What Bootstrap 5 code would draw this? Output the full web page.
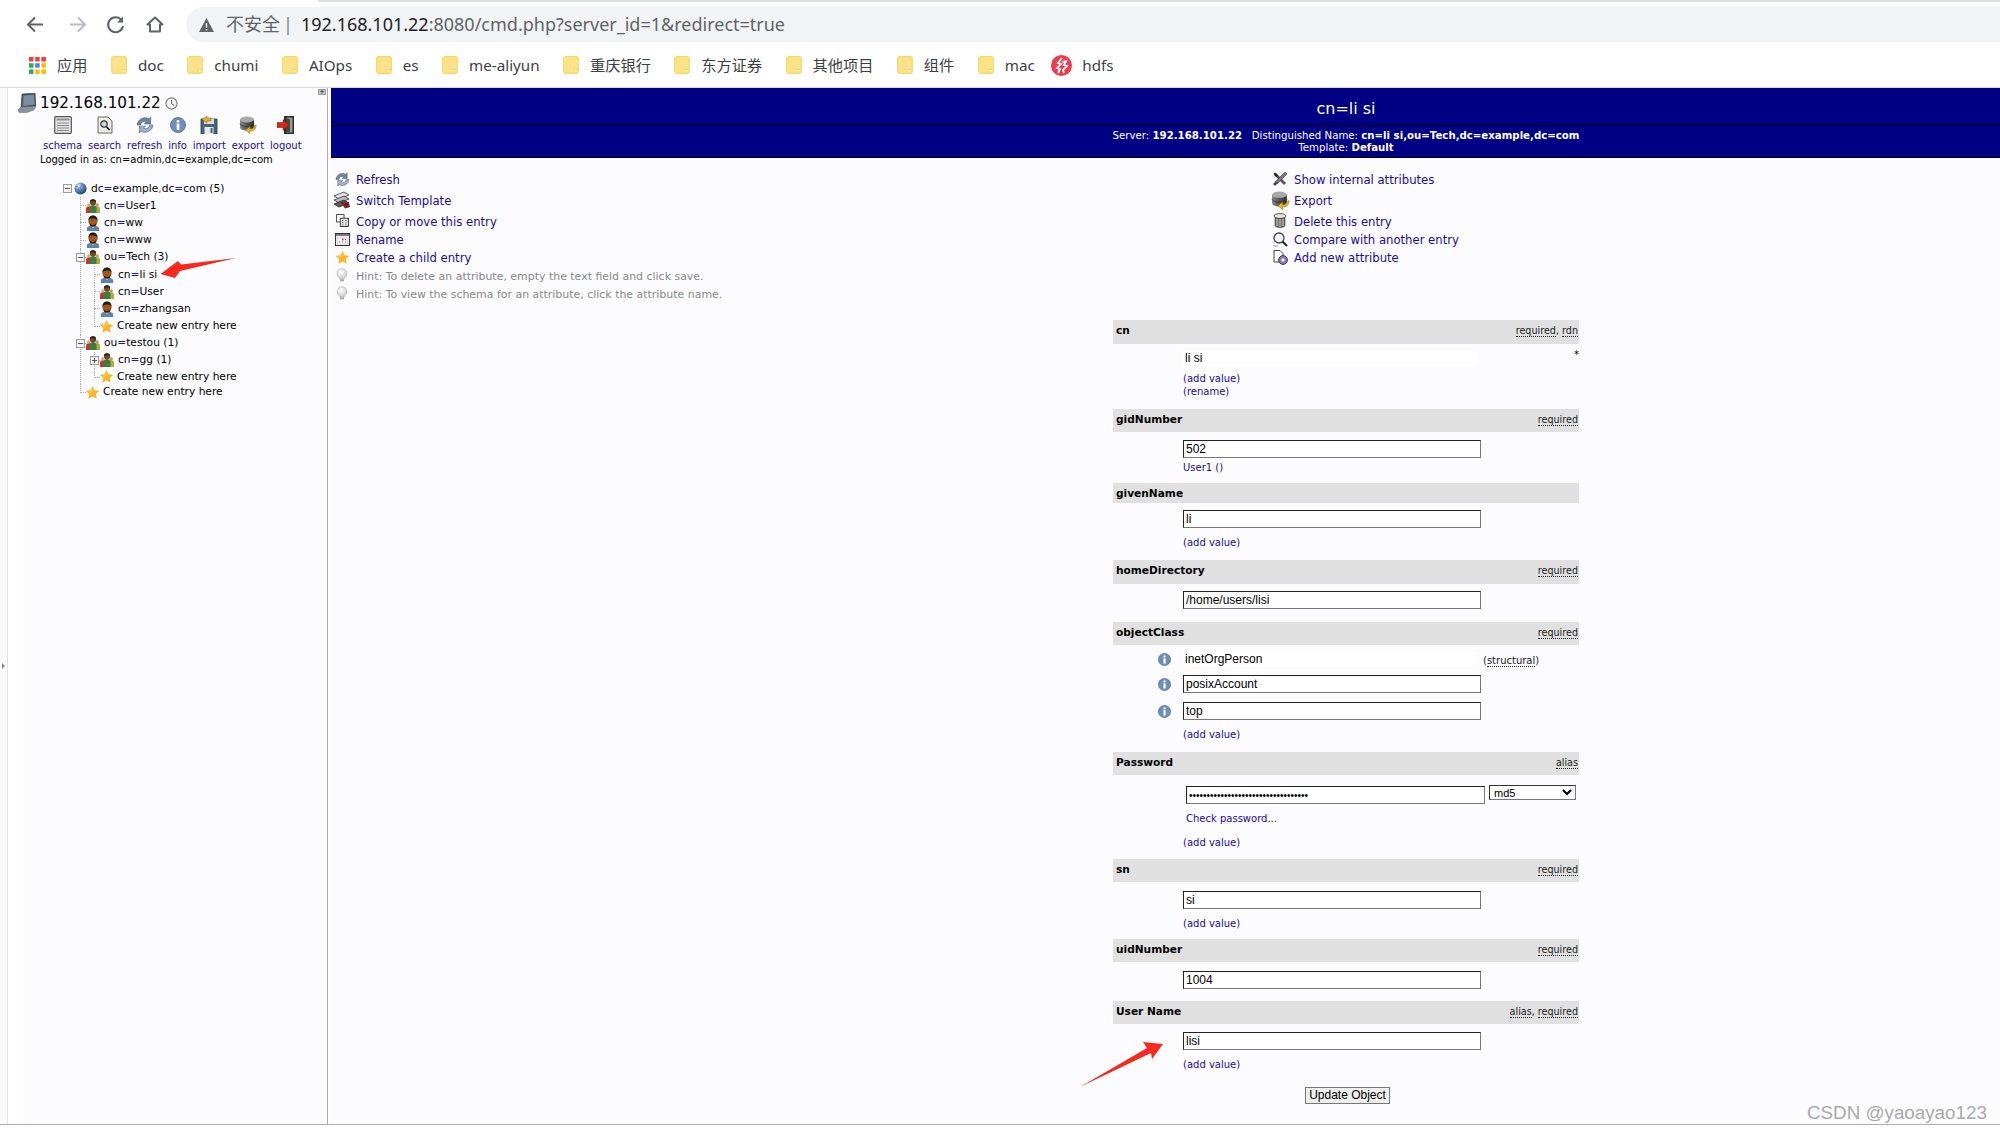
<!DOCTYPE html>
<html lang="zh">
<head>
    <meta charset="UTF-8">
    <title>phpLDAPadmin</title>
    <link href="https://cdn.jsdelivr.net/npm/bootstrap@5.3.0/dist/css/bootstrap.min.css" rel="stylesheet">
    <script src="https://cdn.jsdelivr.net/npm/bootstrap@5.3.0/dist/js/bootstrap.bundle.min.js"></script>
    <style>
        html, body { margin: 0; width: 2000px; height: 1133px; overflow: hidden; background: #fff; }
        body { font-family: "DejaVu Sans", sans-serif; font-size: 11px; color: #000; position: relative; }
        a { text-decoration: none; color: #1a0a9e; }
        .svg-defs { position: absolute; width: 0; height: 0; }

        /* browser chrome */
        .tab-strip { height: 2px; margin-left: 318px; background: #dee1e6; }
        .addr-row { height: 47px; padding-top: 5px; }
        .nav-ico { width: 40px; margin-right: 0; }
        .nav-back { margin-left: 16px; }
        .addr-bar { margin-left: 10px; flex: 1; height: 35px; background: #f1f3f4; border-radius: 18px 0 0 18px; padding-left: 13px; font-family: "Noto Sans", "Noto Sans CJK SC", sans-serif; font-size: 18px; color: #5f6368; white-space: nowrap; }
        .addr-host { color: #202124; }
        .addr-sep { margin: 0 8px 0 3px; color: #80868b; }
        .addr-warn { margin-right: 12px; }
        .bm-row { height: 33px; margin-bottom: 5px; padding-left: 29px; font-family: "Noto Sans", "Noto Sans CJK SC", sans-serif; font-size: 15.2px; color: #3c4043; gap: 23.5px; }
        .bm-item { gap: 11px; }
        .bm-last { margin-left: -7px; gap: 10px; }

        /* frames */
        .frames { height: 1038px; border-top: 1px solid #d8d8d8; border-bottom: 1px solid #aaaacc; }
        .left-strip { width: 8px; background: #fafafa; border-right: 1px solid #e4e4e4; flex: none; }
        .left-tick { width: 0; height: 0; border-top: 3px solid transparent; border-bottom: 3px solid transparent; border-left: 3px solid #888; margin-top: 575px; margin-left: 2px; }
        .tree-pane { width: 320px; flex: none; background: #fcfcff; border-left: 9px solid #fff; border-right: 1px solid #aaaacc; position: relative; padding-top: 5px; }
        .collapse-box { position: absolute; right: 1px; top: 1px; width: 8px; height: 6px; background: #c4c8d0; border: 1px solid #9a9eb0; color: #222; font-size: 7px; line-height: 4px; text-align: center; }
        .srv-line { height: 20px; font-size: 15.2px; padding-left: 1px; gap: 4px; }
        .tool-line { padding-left: 26px; gap: 5.9px; margin-top: 3px; font-size: 10px; text-align: center; }
        .tool-item { line-height: 13px; }
        .tool-item svg { display: block; margin: 0 auto 5px; }
        .logged-line { padding-left: 23px; font-size: 10px; line-height: 13px; margin-top: 1px; }

        .ldap-tree, .ldap-tree ul { list-style: none; padding: 0; margin: 0; }
        .ldap-tree { margin-top: 14px; font-size: 10.65px; }
        .ldap-tree ul { margin-left: 14px; }
        .ldap-tree > li > ul { margin-left: 63px; }
        .ldap-tree .tree-entry { position: relative; }
        .ldap-tree .tree-entry::before { content: ""; position: absolute; left: 0; top: 0; bottom: 0; border-left: 1px dotted #aaa; }
        .ldap-tree .tree-entry:last-child::before { bottom: auto; height: 9px; }
        .tree-entry > .tree-row::before { content: ""; position: absolute; left: 0; width: 6px; top: 8px; border-top: 1px dotted #aaa; }
        .tree-row { height: 17.2px; padding-left: 6px; position: relative; white-space: nowrap; }
        .tree-row svg { flex: none; margin-right: 4px; }
        .root-row { padding-left: 57px; }
        .row-s1 { height: 15px; }
        .row-s2 { height: 16px; }
        .expander { position: absolute; width: 9px; height: 9px; left: -4px; top: 4px; background: #f4f4f4; border: 1px solid #999; z-index: 1; }
        .expander::before { content: ""; position: absolute; left: 1px; right: 1px; top: 3px; height: 1px; background: #555; }
        .exp-plus::after { content: ""; position: absolute; top: 1px; bottom: 1px; left: 3px; width: 1px; background: #555; }
        .root-row .expander { left: 46px; }
        .eq-mark { color: #1414e0; }
        .comma-mark { color: #e03030; }

        /* main frame */
        .main-pane { width: 2030px; margin-left: 3px; flex: none; background: #fcfcff; }
        .title-box { height: 70px; background: #000084; border-bottom: 1px solid #000; color: #fff; text-align: center; }
        .title-main { height: 38px; border-bottom: 1px solid #000; font-size: 16px; line-height: 41px; }
        .title-sub { font-size: 10.2px; line-height: 12px; padding-top: 4px; }
        .act-area { padding-top: 12.5px; height: 146px; font-size: 11.65px; }
        .act-left { width: 938px; flex: none; }
        .act-list { display: grid; grid-template-rows: 21px 21px 19.5px 18px 18px 18px 18px; }
        .act-cell { white-space: nowrap; }
        .act-icon { width: 22px; margin-right: 3px; margin-bottom: 4px; flex: none; display: flex; justify-content: center; }
        .hint-text { color: #888; font-size: 10.95px; }

        .attr-form { width: 466px; margin-left: 782px; margin-top: 16px; }
        .attr-head { background: #e0e0e0; height: 23px; padding: 0 1px 0 3px; font-size: 10.6px; font-weight: 700; line-height: 20px; }
        .attr-note { font-weight: 400; font-size: 9.6px; color: #222; line-height: 22px; }
        .attr-note span { border-bottom: 1px dotted #222; line-height: 11px; display: inline-block; }
        .attr-body { display: flow-root; padding-left: 70px; font-size: 10px; }
        .b65 { height: 65px; } .b51 { height: 51px; } .b57 { height: 57px; } .b38 { height: 38px; } .b39 { height: 39px; }
        .b107 { height: 107px; } .b84 { height: 84px; } .b100 { height: 100px; }
        .attr-head.h24 { height: 24px; } .attr-head.h20 { height: 20px; }
        .ldap-input { display: block; width: 298px; height: 18px; margin-top: 8px; padding: 0 2px; border: 1px solid; border-color: #222 #777 #777 #222; background: #fff; font-family: "Liberation Sans", sans-serif; font-size: 12px; color: #000; border-radius: 0; }
        .ldap-input.mt7 { margin-top: 7px; }
        .ldap-input.mt9 { margin-top: 9px; }
        .ldap-value { width: 295px; height: 17px; background: #fff; padding-left: 2px; font-family: "Liberation Sans", sans-serif; font-size: 12px; line-height: 17px; }
        .val-first { margin-top: 6px; }
        .star-mark { margin-top: 3px; }
        .add-val { display: block; line-height: 13px; margin-top: 7.5px; }
        .add-val.mt5 { margin-top: 5px; }
        .add-val.mt3 { margin-top: 3px; }
        .add-val.mt0 { margin-top: 0; }
        .oc-body { padding-left: 45px; }
        .oc-row { gap: 12px; }
        .oc-row svg { flex: none; }
        .oc-row .ldap-input { margin-top: 0; }
        .oc-first { margin-top: 7px; height: 15px; }
        .oc-first .ldap-value { width: 295px; height: 15px; line-height: 15px; }
        .oc-second { margin-top: 8px; }
        .oc-third { margin-top: 9px; }
        .oc-add { margin-left: 25px; }
        .struct-note { color: #222; margin-left: -7px; line-height: 15px; padding-top: 2px; }
        .struct-note span { border-bottom: 1px dotted #222; line-height: 11px; display: inline-block; }
        .pw-body { padding-left: 73px; }
        .pw-input { width: 299px; margin-top: 11px; font-size: 10px; }
        .pw-select { width: 87px; height: 15px; margin: 10px 0 0 4px; padding: 0; font-family: "Liberation Sans", sans-serif; font-size: 11px; border: 1px solid #777; border-color: #333 #777 #777 #333; background: #fff; }
        .check-pw { line-height: 13px; margin-top: 8px; }
        .pw-add { margin-left: -3px; margin-top: 11px; }
        .update-btn { display: block; margin: 16px 0 0 122px; width: 85px; height: 17px; padding: 0; border: 1px solid #767676; border-radius: 0; background: #efefef; color: #000; font-family: "Liberation Sans", sans-serif; font-size: 12px; line-height: 15px; }

        .red-arrow { position: absolute; left: 0; top: 0; pointer-events: none; }
        .watermark { position: absolute; left: 1807px; top: 1101px; font-family: "Liberation Sans", sans-serif; font-size: 18.8px; line-height: 24px; color: #a9a9a9; white-space: nowrap; }
    </style>
</head>
<body>
<svg class="svg-defs">
    <defs>
        <radialGradient id="globeFill" cx="35%" cy="30%" r="75%"><stop offset="0" stop-color="#e8f2fb"/><stop offset=".45" stop-color="#5f8fc0"/><stop offset="1" stop-color="#1f3f66"/></radialGradient>
        <radialGradient id="bulbFill" cx="40%" cy="35%" r="70%"><stop offset="0" stop-color="#fff"/><stop offset="1" stop-color="#c8c8c0"/></radialGradient>
        <linearGradient id="dbFill" x1="0" x2="1"><stop offset="0" stop-color="#8a8a8a"/><stop offset=".4" stop-color="#5c5c5c"/><stop offset="1" stop-color="#333"/></linearGradient>

        <symbol id="i-person" viewBox="0 0 16 18">
            <path d="M1 18v-3c0-2 3-3 7-3s7 1 7 3v3z" fill="#5d84ab"/>
            <path d="M6 12l2 3 2-3z" fill="#dfe6ee"/>
            <ellipse cx="8" cy="7" rx="5.2" ry="6.4" fill="#a0561c"/>
            <path d="M2.8 6.5C2.6 2.5 5 .3 8 .3s5.4 2.2 5.2 6.2c-1-2-2.4-2.6-5.2-2.6S3.800 4.500 2.800 6.500z" fill="#1e1a18"/>
            <path d="M5 9.500c1.500 2.600 4.500 2.600 6 0l.5 1.800c-1.600 2.300-5.400 2.300-7 0z" fill="#2a1e14"/>
        </symbol>
        <symbol id="i-org" viewBox="0 0 16 16">
            <path d="M0 16v-5c0-2 2-3 4-3s4 1 4 3v5z" fill="#c8342c"/>
            <path d="M8 16v-5c0-2 2-3 4-3s4 1 4 3v5z" fill="#a8b03a"/>
            <path d="M4 16v-6c0-2 2-3 4-3s4 1 4 3v6z" fill="#3f7d3f"/>
            <circle cx="8" cy="4" r="3.600" fill="#6e4a28"/>
            <path d="M4.400 3.600C4.600 1 6 .2 8 .2s3.400.8 3.600 3.400C10 2.400 6 2.400 4.400 3.600z" fill="#222"/>
            <circle cx="3.300" cy="6.800" r="2" fill="#d8a878"/>
            <circle cx="12.700" cy="6.800" r="2" fill="#c89868"/>
        </symbol>
        <symbol id="i-globe" viewBox="0 0 14 14">
            <circle cx="7" cy="7" r="6.500" fill="url(#globeFill)"/>
            <path d="M2 5c2-1 3 0 3 2s1 3 2 3 1-2 0-3 0-3 2-4" fill="none" stroke="#2c4f78" stroke-width=".8" opacity=".6"/>
        </symbol>
        <symbol id="i-star" viewBox="0 0 16 16">
            <path d="M8 .5l2.300 5 5.400.6-4 3.700 1.100 5.400L8 12.500l-4.800 2.700 1.100-5.400-4-3.700 5.400-.6z" fill="#ffb31a" stroke="#f0a020" stroke-width=".4"/>
            <path d="M8 2.500l-1.500 4-4 .5 3 2.500 4-4z" fill="#ffd566" opacity=".7"/>
        </symbol>
        <symbol id="i-info" viewBox="0 0 16 16">
            <circle cx="8" cy="8" r="7.500" fill="#6d8fb8" stroke="#4a658a" stroke-width=".8"/>
            <circle cx="8" cy="4.300" r="1.400" fill="#fff"/>
            <rect x="6.700" y="6.500" width="2.700" height="6.500" fill="#fff"/>
        </symbol>
        <symbol id="i-refresh" viewBox="0 0 16 16">
            <path d="M1 8a7 7 0 0 1 10.500-5.500L13 1v6H7.500l1.800-1.800A3.500 3.500 0 0 0 4 8z" fill="#6d85a3" stroke="#3e4f66" stroke-width=".5"/>
            <path d="M15 8a7 7 0 0 1-10.500 5.500L3 15V9h5.500l-1.800 1.800A3.500 3.500 0 0 0 12 8z" fill="#9fb2c8" stroke="#3e4f66" stroke-width=".5"/>
        </symbol>
        <symbol id="i-schema" viewBox="0 0 18 18">
            <rect x=".7" y=".7" width="16.600" height="16.600" rx="1" fill="#e4e4e4" stroke="#555" stroke-width="1.200"/>
            <rect x="2.500" y="2.500" width="13" height="2" fill="#8f8f8f"/>
            <path d="M3 7h12M3 9.500h12M3 12h12M3 14.500h12" stroke="#888" stroke-width="1"/>
        </symbol>
        <symbol id="i-search" viewBox="0 0 16 18">
            <path d="M1 1h10l4 4v12H1z" fill="#f0ede6" stroke="#666"/>
            <circle cx="7" cy="8" r="3.200" fill="#cfd8e0" stroke="#333" stroke-width="1.200"/>
            <path d="M9.300 10.500l3.200 3.500" stroke="#222" stroke-width="1.800"/>
        </symbol>
        <symbol id="i-import" viewBox="0 0 18 18">
            <path d="M1 3h16v15H1z" fill="#47627f" stroke="#2a3a4c" stroke-width=".8"/>
            <rect x="4" y="3" width="10" height="5" fill="#dfdfdf"/>
            <rect x="4.500" y="11" width="9" height="7" fill="#e8e8e8"/>
            <rect x="10.500" y="12" width="2" height="5" fill="#47627f"/>
            <path d="M7 0L2 3.500 7 7V5h4V2H7z" fill="#e8b020" stroke="#7a5a10" stroke-width=".5"/>
        </symbol>
        <symbol id="i-db" viewBox="0 0 18 18">
            <path d="M1 3.500v8c0 1.800 3.400 3 7 3s7-1.200 7-3v-8z" fill="url(#dbFill)"/>
            <ellipse cx="8" cy="3.500" rx="7" ry="3" fill="#a8a8a8"/>
            <path d="M1 7.500c0 1.800 3.400 3 7 3s7-1.200 7-3" fill="none" stroke="#222" stroke-width=".6"/>
            <path d="M17 9c.5 4-2.500 6.500-6 6v2.500l-4.500-3.500 4.500-3.500V13c2.500.2 4-1 4-3z" fill="#e8b428" stroke="#8a6a14" stroke-width=".5"/>
        </symbol>
        <symbol id="i-logout" viewBox="0 0 18 18">
            <path d="M7 0h10v18H7z" fill="#2a2a2a"/>
            <path d="M9 1.500h6.500v15H9z" fill="#8fa090"/>
            <path d="M9 1.500l4 2v12l-4 1z" fill="#3d4a3e"/>
            <path d="M0 6.500h6V3.500l6 5.500-6 5.500v-3H0z" fill="#d42618" stroke="#7a1008" stroke-width=".5"/>
        </symbol>
        <symbol id="i-server" viewBox="0 0 18 20">
            <path d="M4 1l13-1 1 13-15 2z" fill="#4b5560" stroke="#33393f" stroke-width=".6"/>
            <path d="M5.500 2.500l10.500-.8.700 9.800-11.700 1.600z" fill="#7d8ea3"/>
            <path d="M0 17l3-3 15-1-2 4-7 2.500H1z" fill="#8b9299" stroke="#555" stroke-width=".4"/>
        </symbol>
        <symbol id="i-clock" viewBox="0 0 13 13">
            <circle cx="6.500" cy="6.500" r="5.600" fill="#f2f2f2" stroke="#777" stroke-width="1.100"/>
            <path d="M6.500 2.800v3.900l2.800 1.700" fill="none" stroke="#666" stroke-width="1"/>
        </symbol>
        <symbol id="i-switch" viewBox="0 0 18 18">
            <path d="M1 5l10-4 5 3-10 4z" fill="#e6e6e6" stroke="#333" stroke-width=".8"/>
            <path d="M1 9l10-4 5 3-10 4z" fill="#bdbdbd" stroke="#333" stroke-width=".8"/>
            <path d="M1 13l10-4 5 3-10 4z" fill="#5a5a5a" stroke="#222" stroke-width=".8"/>
            <path d="M8 11l8 1 1 4-5 1.500z" fill="#7a1c20"/>
        </symbol>
        <symbol id="i-copy" viewBox="0 0 14 14">
            <rect x=".6" y=".6" width="8" height="8" fill="#fff" stroke="#444" stroke-width="1"/>
            <rect x="4.600" y="4.600" width="8.800" height="8.800" fill="#e8e8e8" stroke="#333" stroke-width="1"/>
            <path d="M6.500 7h1.500M10 7h1.500M6.500 9.500h1.500M10 9.500h1.500M6.500 11.800h1.500M10 11.800h1.500" stroke="#555"/>
        </symbol>
        <symbol id="i-rename" viewBox="0 0 15 13">
            <rect x=".5" y=".5" width="14" height="12" fill="#f2f2f2" stroke="#333"/>
            <rect x="1" y="1" width="13" height="2" fill="#6d7c8f"/>
            <rect x="2.500" y="5" width="10" height="6" fill="#fff" stroke="#aaa" stroke-width=".5"/>
            <path d="M7 5.500h1.500v2H7z" fill="#c83a2a"/>
            <path d="M4 9h1M7 9h1M10 9h1M10 6.500h1" stroke="#555"/>
        </symbol>
        <symbol id="i-bulb" viewBox="0 0 12 14">
            <path d="M6 .6a5 5 0 0 1 3 9l-.5 1.400h-5L3 9.600a5 5 0 0 1 3-9z" fill="url(#bulbFill)" stroke="#bbb" stroke-width=".6"/>
            <path d="M4 11.300h4v2H4z" fill="#a8a8a8"/>
        </symbol>
        <symbol id="i-tools" viewBox="0 0 14 14">
            <path d="M1 3l2-2 10 10-2 2z" fill="#555"/>
            <path d="M2 .5L5 3.500 3.500 5 .5 2z" fill="#222"/>
            <path d="M12 0L2.500 9.500l2 2L14 2z" fill="#777" stroke="#333" stroke-width=".5"/>
            <path d="M0 12l3-3 2 2-3 3z" fill="#34506e"/>
        </symbol>
        <symbol id="i-trash" viewBox="0 0 14 15">
            <path d="M2 3v9.500c0 1.200 2.200 2 5 2s5-.8 5-2V3z" fill="#6e6e62" stroke="#333" stroke-width=".6"/>
            <path d="M4 6v7M7 6v8M10 6v7" stroke="#cfcfc4" stroke-width="1"/>
            <ellipse cx="7" cy="3" rx="6" ry="2.400" fill="#e6e6d8" stroke="#333" stroke-width=".8"/>
        </symbol>
        <symbol id="i-compare" viewBox="0 0 15 15">
            <circle cx="6" cy="6" r="5" fill="#f6f6f6" stroke="#444" stroke-width="1.300"/>
            <path d="M9.500 9.500l4.500 4.500" stroke="#222" stroke-width="2"/>
            <path d="M0 14h5" stroke="#999"/>
        </symbol>
        <symbol id="i-addattr" viewBox="0 0 15 15">
            <path d="M1 .5h6l3 3V12H1z" fill="#fff" stroke="#444"/>
            <circle cx="10" cy="10" r="4.400" fill="#8a7fa6" stroke="#3a3450"/>
            <path d="M8 10h4M10 8v4" stroke="#fff" stroke-width="1"/>
        </symbol>
        <symbol id="i-folder" viewBox="0 0 16 18">
            <rect x=".7" y=".7" width="14.600" height="16.600" rx="2" fill="#fde28a" stroke="#f6d869" stroke-width="1.200"/>
            <path d="M11 17v-3.500h4.300" fill="#fff3b8" stroke="#f6d869"/>
        </symbol>
    </defs>
</svg>

<div class="tab-strip"></div>
<div class="addr-row d-flex align-items-start">
    <svg class="nav-ico nav-back" width="40" height="35" viewBox="0 0 40 35"><path d="M27 17.500H13M19 10.500l-7 7 7 7" fill="none" stroke="#5f6368" stroke-width="2"/></svg>
    <svg class="nav-ico" width="40" height="35" viewBox="0 0 40 35"><path d="M14 17.500h14M22 10.500l7 7-7 7" fill="none" stroke="#b8bbbf" stroke-width="2"/></svg>
    <svg class="nav-ico" width="40" height="35" viewBox="0 0 40 35"><path d="M25.500 13a7.500 7.500 0 1 0 1.500 6" fill="none" stroke="#5f6368" stroke-width="2"/><path d="M27 9.500v6h-6z" fill="#5f6368"/></svg>
    <svg class="nav-ico" width="40" height="35" viewBox="0 0 40 35"><path d="M19 10.500l-7.500 7H14v7h10v-7h2.500z" fill="none" stroke="#5f6368" stroke-width="2" stroke-linejoin="round"/></svg>
    <div class="addr-bar d-flex align-items-center">
        <svg class="addr-warn" width="15" height="14" viewBox="0 0 15 14"><path d="M7.500 0L15 14H0z" fill="#5f6368"/><path d="M6.800 5h1.400v5H6.800zM6.800 11h1.400v1.400H6.800z" fill="#f1f3f4"/></svg>
        <span>不安全</span><span class="addr-sep">|</span><span><span class="addr-host">192.168.101.22</span>:8080/cmd.php?server_id=1&amp;redirect=true</span>
    </div>
</div>
<div class="bm-row d-flex align-items-center">
    <div class="bm-item d-flex align-items-center">
        <svg width="17" height="17" viewBox="0 0 17 17">
            <rect width="4.500" height="4.500" fill="#ea4335"/><rect x="6.200" width="4.500" height="4.500" fill="#ea4335"/><rect x="12.400" width="4.500" height="4.500" fill="#ea4335"/>
            <rect y="6.200" width="4.500" height="4.500" fill="#34a853"/><rect x="6.200" y="6.200" width="4.500" height="4.500" fill="#4285f4"/><rect x="12.400" y="6.200" width="4.500" height="4.500" fill="#fbbc05"/>
            <rect y="12.400" width="4.500" height="4.500" fill="#34a853"/><rect x="6.200" y="12.400" width="4.500" height="4.500" fill="#fbbc05"/><rect x="12.400" y="12.400" width="4.500" height="4.500" fill="#fbbc05"/>
        </svg><span>应用</span>
    </div>
    <div class="bm-item d-flex align-items-center"><svg width="16" height="18"><use href="#i-folder"/></svg><span>doc</span></div>
    <div class="bm-item d-flex align-items-center"><svg width="16" height="18"><use href="#i-folder"/></svg><span>chumi</span></div>
    <div class="bm-item d-flex align-items-center"><svg width="16" height="18"><use href="#i-folder"/></svg><span>AIOps</span></div>
    <div class="bm-item d-flex align-items-center"><svg width="16" height="18"><use href="#i-folder"/></svg><span>es</span></div>
    <div class="bm-item d-flex align-items-center"><svg width="16" height="18"><use href="#i-folder"/></svg><span>me-aliyun</span></div>
    <div class="bm-item d-flex align-items-center"><svg width="16" height="18"><use href="#i-folder"/></svg><span>重庆银行</span></div>
    <div class="bm-item d-flex align-items-center"><svg width="16" height="18"><use href="#i-folder"/></svg><span>东方证券</span></div>
    <div class="bm-item d-flex align-items-center"><svg width="16" height="18"><use href="#i-folder"/></svg><span>其他项目</span></div>
    <div class="bm-item d-flex align-items-center"><svg width="16" height="18"><use href="#i-folder"/></svg><span>组件</span></div>
    <div class="bm-item d-flex align-items-center"><svg width="16" height="18"><use href="#i-folder"/></svg><span>mac</span></div>
    <div class="bm-item bm-last d-flex align-items-center">
        <svg width="21" height="21" viewBox="0 0 21 21"><circle cx="10.500" cy="10.500" r="10.500" fill="#ee3b4f"/><path d="M11 3l-4 5 3 1-4 4 3 1-2 4M11 7l4-1-2 4 3 1-4 4 1 3" fill="none" stroke="#fff" stroke-width="1.800"/></svg><span>hdfs</span>
    </div>
</div>

<div class="frames d-flex overflow-hidden">
    <div class="left-strip"><div class="left-tick"></div></div>
    <aside class="tree-pane">
        <div class="collapse-box">+</div>
        <div class="srv-line d-flex align-items-center">
            <svg width="18" height="20"><use href="#i-server"/></svg>
            <span>192.168.101.22</span>
            <svg width="13" height="13"><use href="#i-clock"/></svg>
        </div>
        <div class="tool-line d-flex">
            <a class="tool-item" href="#"><svg width="18" height="18"><use href="#i-schema"/></svg>schema</a>
            <a class="tool-item" href="#"><svg width="16" height="18"><use href="#i-search"/></svg>search</a>
            <a class="tool-item" href="#"><svg width="18" height="18"><use href="#i-refresh"/></svg>refresh</a>
            <a class="tool-item" href="#"><svg width="16" height="18"><use href="#i-info"/></svg>info</a>
            <a class="tool-item" href="#"><svg width="18" height="18"><use href="#i-import"/></svg>import</a>
            <a class="tool-item" href="#"><svg width="18" height="18"><use href="#i-db"/></svg>export</a>
            <a class="tool-item" href="#"><svg width="18" height="18"><use href="#i-logout"/></svg>logout</a>
        </div>
        <div class="logged-line">Logged in as: cn=admin,dc=example,dc=com</div>

        <ul class="ldap-tree">
            <li>
                <div class="tree-row root-row d-flex align-items-center"><span class="expander"></span><svg width="13" height="13"><use href="#i-globe"/></svg>dc<span class="eq-mark">=</span>example<span class="comma-mark">,</span>dc<span class="eq-mark">=</span>com (5)</div>
                <ul>
                    <li class="tree-entry"><div class="tree-row d-flex align-items-center"><svg width="14" height="14"><use href="#i-org"/></svg>cn<span class="eq-mark">=</span>User1</div></li>
                    <li class="tree-entry"><div class="tree-row d-flex align-items-center"><svg width="14" height="16"><use href="#i-person"/></svg>cn<span class="eq-mark">=</span>ww</div></li>
                    <li class="tree-entry"><div class="tree-row d-flex align-items-center"><svg width="14" height="16"><use href="#i-person"/></svg>cn<span class="eq-mark">=</span>www</div></li>
                    <li class="tree-entry">
                        <div class="tree-row d-flex align-items-center"><span class="expander"></span><svg width="14" height="14"><use href="#i-org"/></svg>ou<span class="eq-mark">=</span>Tech (3)</div>
                        <ul>
                            <li class="tree-entry"><div class="tree-row d-flex align-items-center"><svg width="14" height="16"><use href="#i-person"/></svg>cn<span class="eq-mark">=</span>li si</div></li>
                            <li class="tree-entry"><div class="tree-row d-flex align-items-center"><svg width="14" height="14"><use href="#i-org"/></svg>cn<span class="eq-mark">=</span>User</div></li>
                            <li class="tree-entry"><div class="tree-row d-flex align-items-center"><svg width="14" height="16"><use href="#i-person"/></svg>cn<span class="eq-mark">=</span>zhangsan</div></li>
                            <li class="tree-entry"><div class="tree-row d-flex align-items-center"><svg width="13" height="13"><use href="#i-star"/></svg>Create new entry here</div></li>
                        </ul>
                    </li>
                    <li class="tree-entry">
                        <div class="tree-row d-flex align-items-center"><span class="expander"></span><svg width="14" height="14"><use href="#i-org"/></svg>ou<span class="eq-mark">=</span>testou (1)</div>
                        <ul>
                            <li class="tree-entry"><div class="tree-row d-flex align-items-center"><span class="expander exp-plus"></span><svg width="14" height="14"><use href="#i-org"/></svg>cn<span class="eq-mark">=</span>gg (1)</div></li>
                            <li class="tree-entry"><div class="tree-row row-s1 d-flex align-items-center"><svg width="13" height="13"><use href="#i-star"/></svg>Create new entry here</div></li>
                        </ul>
                    </li>
                    <li class="tree-entry"><div class="tree-row row-s2 d-flex align-items-center"><svg width="13" height="13"><use href="#i-star"/></svg>Create new entry here</div></li>
                </ul>
            </li>
        </ul>
    </aside>

    <main class="main-pane">
        <div class="title-box">
            <div class="title-main">cn=li si</div>
            <div class="title-sub">
                Server: <b>192.168.101.22</b> &nbsp; Distinguished Name: <b>cn=li si,ou=Tech,dc=example,dc=com</b><br>
                Template: <b>Default</b>
            </div>
        </div>

        <div class="act-area d-flex">
            <div class="act-left act-list">
                <div class="act-cell d-flex align-items-center"><span class="act-icon"><svg width="15" height="15"><use href="#i-refresh"/></svg></span><a href="#">Refresh</a></div>
                <div class="act-cell d-flex align-items-center"><span class="act-icon"><svg width="18" height="18"><use href="#i-switch"/></svg></span><a href="#">Switch Template</a></div>
                <div class="act-cell d-flex align-items-center"><span class="act-icon"><svg width="13" height="13"><use href="#i-copy"/></svg></span><a href="#">Copy or move this entry</a></div>
                <div class="act-cell d-flex align-items-center"><span class="act-icon"><svg width="15" height="13"><use href="#i-rename"/></svg></span><a href="#">Rename</a></div>
                <div class="act-cell d-flex align-items-center"><span class="act-icon"><svg width="13" height="13"><use href="#i-star"/></svg></span><a href="#">Create a child entry</a></div>
                <div class="act-cell d-flex align-items-center"><span class="act-icon"><svg width="12" height="14"><use href="#i-bulb"/></svg></span><span class="hint-text">Hint: To delete an attribute, empty the text field and click save.</span></div>
                <div class="act-cell d-flex align-items-center"><span class="act-icon"><svg width="12" height="14"><use href="#i-bulb"/></svg></span><span class="hint-text">Hint: To view the schema for an attribute, click the attribute name.</span></div>
            </div>
            <div class="act-list">
                <div class="act-cell d-flex align-items-center"><span class="act-icon"><svg width="14" height="14"><use href="#i-tools"/></svg></span><a href="#">Show internal attributes</a></div>
                <div class="act-cell d-flex align-items-center"><span class="act-icon"><svg width="19" height="19"><use href="#i-db"/></svg></span><a href="#">Export</a></div>
                <div class="act-cell d-flex align-items-center"><span class="act-icon"><svg width="14" height="15"><use href="#i-trash"/></svg></span><a href="#">Delete this entry</a></div>
                <div class="act-cell d-flex align-items-center"><span class="act-icon"><svg width="15" height="15"><use href="#i-compare"/></svg></span><a href="#">Compare with another entry</a></div>
                <div class="act-cell d-flex align-items-center"><span class="act-icon"><svg width="15" height="15"><use href="#i-addattr"/></svg></span><a href="#">Add new attribute</a></div>
            </div>
        </div>

        <form class="attr-form" onsubmit="return false">
            <div class="attr-head h24 d-flex justify-content-between"><span>cn</span><span class="attr-note"><span>required</span>, <span>rdn</span></span></div>
            <div class="attr-body b65">
                <div class="d-flex justify-content-between">
                    <div class="ldap-value val-first">li si</div>
                    <span class="star-mark">*</span>
                </div>
                <a class="add-val mt5" href="#">(add value)</a>
                <a class="add-val mt0" href="#">(rename)</a>
            </div>

            <div class="attr-head d-flex justify-content-between"><span>gidNumber</span><span class="attr-note"><span>required</span></span></div>
            <div class="attr-body b51">
                <input class="ldap-input" type="text" value="502">
                <a class="add-val mt3" href="#">User1 ()</a>
            </div>

            <div class="attr-head h20 d-flex justify-content-between"><span>givenName</span></div>
            <div class="attr-body b57">
                <input class="ldap-input mt7" type="text" value="li">
                <a class="add-val" href="#">(add value)</a>
            </div>

            <div class="attr-head h24 d-flex justify-content-between"><span>homeDirectory</span><span class="attr-note"><span>required</span></span></div>
            <div class="attr-body b38">
                <input class="ldap-input mt7" type="text" value="/home/users/lisi">
            </div>

            <div class="attr-head d-flex justify-content-between"><span>objectClass</span><span class="attr-note"><span>required</span></span></div>
            <div class="attr-body oc-body b107">
                <div class="oc-row oc-first d-flex align-items-center">
                    <svg width="13" height="13"><use href="#i-info"/></svg>
                    <div class="ldap-value">inetOrgPerson</div>
                    <span class="struct-note">(<span>structural</span>)</span>
                </div>
                <div class="oc-row oc-second d-flex align-items-center">
                    <svg width="13" height="13"><use href="#i-info"/></svg>
                    <input class="ldap-input" type="text" value="posixAccount">
                </div>
                <div class="oc-row oc-third d-flex align-items-center">
                    <svg width="13" height="13"><use href="#i-info"/></svg>
                    <input class="ldap-input" type="text" value="top">
                </div>
                <a class="add-val oc-add" href="#">(add value)</a>
            </div>

            <div class="attr-head d-flex justify-content-between"><span>Password</span><span class="attr-note"><span>alias</span></span></div>
            <div class="attr-body pw-body b84">
                <div class="d-flex align-items-start">
                    <input class="ldap-input pw-input" type="text" value="••••••••••••••••••••••••••••••••••">
                    <select class="pw-select"><option>md5</option></select>
                </div>
                <a class="check-pw d-block" href="#">Check password...</a>
                <a class="add-val pw-add" href="#">(add value)</a>
            </div>

            <div class="attr-head d-flex justify-content-between"><span>sn</span><span class="attr-note"><span>required</span></span></div>
            <div class="attr-body b57">
                <input class="ldap-input mt9" type="text" value="si">
                <a class="add-val" href="#">(add value)</a>
            </div>

            <div class="attr-head d-flex justify-content-between"><span>uidNumber</span><span class="attr-note"><span>required</span></span></div>
            <div class="attr-body b39">
                <input class="ldap-input mt9" type="text" value="1004">
            </div>

            <div class="attr-head d-flex justify-content-between"><span>User Name</span><span class="attr-note"><span>alias</span>, <span>required</span></span></div>
            <div class="attr-body b100">
                <input class="ldap-input" type="text" value="lisi">
                <a class="add-val" href="#">(add value)</a>
                <button class="btn update-btn" type="button">Update Object</button>
            </div>
        </form>
    </main>
</div>

<svg class="red-arrow" width="2000" height="1133" viewBox="0 0 2000 1133">
    <polygon points="160.500,274 178,261 181,264.500 236,258 180,271 175,278" fill="#f7281e"/>
    <polygon points="1163,1044 1143,1042 1147,1048 1080,1087 1151,1053 1152,1059" fill="#f7281e"/>
</svg>
<div class="watermark">CSDN @yaoayao123</div>
</body>
</html>
